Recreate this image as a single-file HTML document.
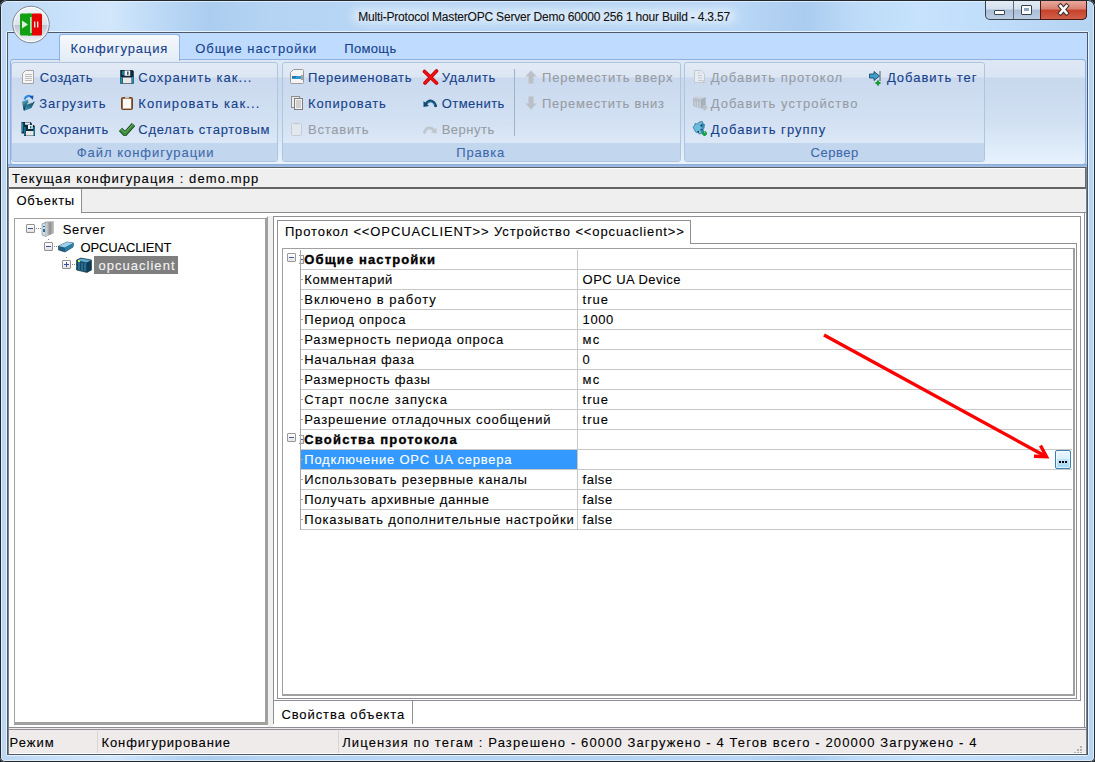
<!DOCTYPE html>
<html><head><meta charset="utf-8"><title>MasterOPC</title>
<style>
html,body{margin:0;padding:0;width:1095px;height:762px;overflow:hidden;background:#1E2328;}
.b{position:absolute;}
.t{position:absolute;white-space:nowrap;font-family:"Liberation Sans",sans-serif;line-height:16px;-webkit-text-stroke:0.1px currentColor;}
</style></head><body>
<div class="b" style="left:0px;top:0px;width:1095px;height:762px;background:linear-gradient(90deg,#BCD7F3 0px,#C8E1FA 60px,#D2E7FB 110px,#B8D6F5 170px,#ABCDEF 210px,#B5D4F4 270px,#B8D6F5 400px,#B4D3F3 560px,#B9D7F6 740px,#AACCEF 805px,#BDDBF8 855px,#C6E2FC 920px,#BFDCFA 1000px,#B5D4F2 1095px);border-radius:7px 7px 5px 5px;box-shadow:inset 0 0 0 1px #23282E, inset 0 0 0 2px rgba(230,242,252,0.8);"></div>
<div class="b" style="left:352px;top:9px;width:384px;height:14px;background:rgba(235,244,252,0.75);border-radius:7px;filter:blur(5px);"></div>
<div class="t" style="left:358.30px;top:9px;color:#111;font-size:12px;letter-spacing:-0.195px;">Multi-Protocol MasterOPC Server Demo 60000 256 1 hour Build - 4.3.57</div>
<div class="b" style="left:985px;top:1px;width:102px;height:19px;border:1px solid #3A4450;border-top:none;border-radius:0 0 5px 5px;background:linear-gradient(#E3ECF6 0%,#D2DFEE 45%,#A9BDD6 50%,#BCCDE2 100%);box-sizing:border-box;"></div>
<div class="b" style="left:1040px;top:1px;width:47px;height:19px;border:1px solid #4A1A12;border-top:none;border-radius:0 0 5px 0;background:linear-gradient(#E9A99C 0%,#D98070 45%,#C7402A 50%,#D2604A 100%);box-sizing:border-box;"></div>
<div class="b" style="left:1013px;top:1px;width:1px;height:18px;background:#5E6B7A;"></div>
<div class="b" style="left:994px;top:10px;width:11px;height:5px;background:#fff;border:1px solid #3A4450;border-radius:1px;box-sizing:border-box;"></div>
<div class="b" style="left:1021px;top:5px;width:11px;height:10px;background:#fff;border:1px solid #3A4450;border-radius:1px;box-sizing:border-box;"></div>
<div class="b" style="left:1024px;top:8px;width:5px;height:3px;background:#8FA4BE;"></div>
<svg class="b" style="left:1055px;top:2px" width="17" height="15" viewBox="0 0 17 15"><path d="M5.5 4 L11.5 11 M11.5 4 L5.5 11" stroke="#40302C" stroke-width="4.6" stroke-linecap="square"/><path d="M5.5 4 L11.5 11 M11.5 4 L5.5 11" stroke="#FFFFFF" stroke-width="2.6" stroke-linecap="square"/></svg>
<div class="b" style="left:6px;top:31px;width:1083px;height:725px;border:1px solid rgba(240,248,255,0.85);border-radius:2px;box-sizing:border-box;"></div>
<div class="b" style="left:7px;top:32px;width:1081px;height:723px;border:1px solid #4D5866;box-sizing:border-box;background:#EFEFEF;"></div>
<div class="b" style="left:8px;top:33px;width:1079px;height:27px;background:#BFDBFF;"></div>
<div class="b" style="left:8px;top:59px;width:1079px;height:108px;background:#BFDBFF;"></div>
<div class="b" style="left:10px;top:59px;width:1076px;height:106px;border:1px solid #8DB2E3;border-radius:3px;box-sizing:border-box;background:linear-gradient(#DEE8F5 0px,#DAE5F3 17px,#C8D8ED 18px,#D0DFF1 60px,#E7F2FD 104px);"></div>
<div class="b" style="left:8px;top:164px;width:1079px;height:3px;background:linear-gradient(#8BAAD6,#A1C1EA);"></div>
<div class="b" style="left:59px;top:34px;width:121px;height:27px;border:1px solid #8DB2E3;border-bottom:none;border-radius:3px 3px 0 0;box-sizing:border-box;background:linear-gradient(#F6F9FC,#E3EBF5);"></div>
<div class="t" style="left:70.40px;top:41px;color:#15428B;font-size:13px;letter-spacing:0.886px;">Конфигурация</div>
<div class="t" style="left:195.30px;top:41px;color:#15428B;font-size:13px;letter-spacing:0.936px;">Общие настройки</div>
<div class="t" style="left:344.20px;top:41px;color:#15428B;font-size:13px;letter-spacing:0.360px;">Помощь</div>
<div class="b" style="left:11px;top:62px;width:267px;height:100px;border:1px solid #AFC5DF;border-radius:3px;box-sizing:border-box;background:linear-gradient(#E2EAF5 0px,#DCE6F3 14px,#CAD9EE 15px,#D3E1F3 60px,#DCE8F6 80px);overflow:hidden;"></div>
<div class="b" style="left:12px;top:143px;width:265px;height:18px;background:#C2D6EE;border-radius:0 0 2px 2px;"></div>
<div class="t" style="left:76.70px;top:145px;color:#3E6AAA;font-size:13px;letter-spacing:0.975px;">Файл конфигурации</div>
<div class="b" style="left:282px;top:62px;width:399px;height:100px;border:1px solid #AFC5DF;border-radius:3px;box-sizing:border-box;background:linear-gradient(#E2EAF5 0px,#DCE6F3 14px,#CAD9EE 15px,#D3E1F3 60px,#DCE8F6 80px);overflow:hidden;"></div>
<div class="b" style="left:283px;top:143px;width:397px;height:18px;background:#C2D6EE;border-radius:0 0 2px 2px;"></div>
<div class="t" style="left:456.20px;top:145px;color:#3E6AAA;font-size:13px;letter-spacing:0.850px;">Правка</div>
<div class="b" style="left:684px;top:62px;width:301px;height:100px;border:1px solid #AFC5DF;border-radius:3px;box-sizing:border-box;background:linear-gradient(#E2EAF5 0px,#DCE6F3 14px,#CAD9EE 15px,#D3E1F3 60px,#DCE8F6 80px);overflow:hidden;"></div>
<div class="b" style="left:685px;top:143px;width:299px;height:18px;background:#C2D6EE;border-radius:0 0 2px 2px;"></div>
<div class="t" style="left:810.60px;top:145px;color:#3E6AAA;font-size:13px;letter-spacing:0.530px;">Сервер</div>
<div class="b" style="left:514px;top:69px;width:1px;height:67px;background:#9FB3CC;"></div>
<div class="t" style="left:39.70px;top:70px;color:#15428B;font-size:13px;letter-spacing:0.583px;">Создать</div>
<div class="t" style="left:39.30px;top:96px;color:#15428B;font-size:13px;letter-spacing:0.844px;">Загрузить</div>
<div class="t" style="left:39.70px;top:122px;color:#15428B;font-size:13px;letter-spacing:0.488px;">Сохранить</div>
<div class="t" style="left:138.30px;top:70px;color:#15428B;font-size:13px;letter-spacing:1.010px;">Сохранить как...</div>
<div class="t" style="left:138.30px;top:96px;color:#15428B;font-size:13px;letter-spacing:1.103px;">Копировать как...</div>
<div class="t" style="left:138.30px;top:122px;color:#15428B;font-size:13px;letter-spacing:0.741px;">Сделать стартовым</div>
<div class="t" style="left:308.10px;top:70px;color:#15428B;font-size:13px;letter-spacing:0.675px;">Переименовать</div>
<div class="t" style="left:308.10px;top:96px;color:#15428B;font-size:13px;letter-spacing:0.856px;">Копировать</div>
<div class="t" style="left:308.10px;top:122px;color:#979CA4;font-size:13px;letter-spacing:0.757px;">Вставить</div>
<div class="t" style="left:441.70px;top:70px;color:#15428B;font-size:13px;letter-spacing:0.675px;">Удалить</div>
<div class="t" style="left:441.70px;top:96px;color:#15428B;font-size:13px;letter-spacing:0.471px;">Отменить</div>
<div class="t" style="left:441.70px;top:122px;color:#979CA4;font-size:13px;letter-spacing:0.508px;">Вернуть</div>
<div class="t" style="left:542.00px;top:70px;color:#979CA4;font-size:13px;letter-spacing:0.791px;">Переместить вверх</div>
<div class="t" style="left:542.00px;top:96px;color:#979CA4;font-size:13px;letter-spacing:0.763px;">Переместить вниз</div>
<div class="t" style="left:710.70px;top:70px;color:#979CA4;font-size:13px;letter-spacing:0.987px;">Добавить протокол</div>
<div class="t" style="left:710.70px;top:96px;color:#979CA4;font-size:13px;letter-spacing:1.036px;">Добавить устройство</div>
<div class="t" style="left:710.70px;top:122px;color:#15428B;font-size:13px;letter-spacing:1.039px;">Добавить группу</div>
<div class="t" style="left:886.90px;top:70px;color:#15428B;font-size:13px;letter-spacing:0.986px;">Добавить тег</div>
<div class="b" style="left:8px;top:167px;width:1079px;height:1px;background:#5A5F66;"></div>
<div class="b" style="left:9px;top:168px;width:1076px;height:19px;background:#EFEFEF;border-top:1px solid #fff;border-left:1px solid #fff;box-sizing:border-box;"></div>
<div class="b" style="left:1085px;top:168px;width:2px;height:20px;background:#6A6A6A;"></div>
<div class="b" style="left:8px;top:187px;width:1079px;height:2px;background:#646464;"></div>
<div class="t" style="left:12.10px;top:171px;color:#000;font-size:13px;letter-spacing:1.100px;">Текущая конфигурация : demo.mpp</div>
<div class="b" style="left:8px;top:189px;width:1079px;height:39px;background:#EFEFEF;"></div>
<div class="b" style="left:8px;top:189px;width:74px;height:24px;background:#fff;"></div>
<div class="b" style="left:81px;top:189px;width:1px;height:24px;background:#8A8D93;"></div>
<div class="b" style="left:82px;top:212px;width:1004px;height:1px;background:#8A8D93;"></div>
<div class="b" style="left:8px;top:213px;width:1078px;height:515px;background:#fff;"></div>
<div class="b" style="left:1084px;top:212px;width:1px;height:516px;background:#8A8D93;"></div>
<div class="b" style="left:8px;top:727px;width:1078px;height:1px;background:#8A8D93;"></div>
<div class="t" style="left:16.60px;top:193px;color:#000;font-size:13px;letter-spacing:0.667px;">Объекты</div>
<div class="b" style="left:14px;top:218px;width:254px;height:507px;border-top:1px solid #A0A0A0;border-left:1px solid #A0A0A0;border-right:3px solid #A0A0A0;border-bottom:3px solid #A0A0A0;box-sizing:border-box;background:#fff;"></div>
<div class="b" style="left:268px;top:216px;width:5px;height:511px;background:#F0F0F0;"></div>
<div class="b" style="left:265px;top:216px;width:3px;height:3px;background:#A0A0A0;clip-path:polygon(100% 0,100% 100%,0 100%);"></div>
<div class="b" style="left:273px;top:216px;width:808px;height:485px;border:1px solid #8E9096;box-sizing:border-box;background:#fff;"></div>
<div class="b" style="left:273px;top:701px;width:140px;height:23px;background:#fff;border-left:1px solid #8E9096;box-sizing:border-box;"></div>
<div class="b" style="left:412px;top:701px;width:1px;height:23px;background:#8E9096;"></div>
<div class="t" style="left:281.40px;top:707px;color:#000;font-size:13px;letter-spacing:0.913px;">Свойства объекта</div>
<div class="b" style="left:277px;top:220px;width:414px;height:24px;border:1px solid #8E9096;border-bottom:none;box-sizing:border-box;background:#fff;"></div>
<div class="b" style="left:277px;top:243px;width:800px;height:456px;border:1px solid #8E9096;border-top:none;box-sizing:border-box;background:#fff;"></div>
<div class="b" style="left:690px;top:243px;width:387px;height:1px;background:#8E9096;"></div>
<div class="t" style="left:284.90px;top:224px;color:#000;font-size:13px;letter-spacing:0.886px;">Протокол &lt;&lt;OPCUACLIENT&gt;&gt; Устройство &lt;&lt;opcuaclient&gt;&gt;</div>
<div class="b" style="left:282px;top:248px;width:793px;height:448px;border-top:1px solid #A0A0A0;border-left:1px solid #A0A0A0;border-right:2px solid #A0A0A0;border-bottom:2px solid #A0A0A0;box-sizing:border-box;background:#fff;"></div>
<div class="t" style="left:304.30px;top:252px;color:#000;font-size:13px;letter-spacing:1.121px;font-weight:bold;-webkit-text-stroke:0.35px currentColor;">Общие настройки</div>
<div class="b" style="left:300px;top:269px;width:772px;height:1px;background:#C8C8C8;"></div>
<div class="b" style="left:301px;top:259px;width:2px;height:1px;background:#A8A8A8;"></div>
<div class="b" style="left:287px;top:253px;width:9px;height:9px;border:1px solid #9A9A9A;border-radius:1px;box-sizing:border-box;background:linear-gradient(#fff,#E4E4E4);"></div>
<div class="b" style="left:289px;top:257px;width:5px;height:1px;background:#4A5A9A;"></div>
<div class="b" style="left:299px;top:255px;width:5px;height:9px;border:1px solid #9A9A9A;border-left:none;border-radius:0 1px 1px 0;box-sizing:border-box;background:linear-gradient(#fff,#E4E4E4);"></div>
<div class="b" style="left:300px;top:259px;width:3px;height:1px;background:#4A5A9A;"></div>
<div class="t" style="left:304.30px;top:272px;color:#000;font-size:13px;letter-spacing:0.610px;">Комментарий</div>
<div class="t" style="left:582.60px;top:272px;color:#000;font-size:13px;letter-spacing:0.454px;">OPC UA Device</div>
<div class="b" style="left:300px;top:289px;width:772px;height:1px;background:#C8C8C8;"></div>
<div class="b" style="left:301px;top:279px;width:2px;height:1px;background:#A8A8A8;"></div>
<div class="t" style="left:304.30px;top:292px;color:#000;font-size:13px;letter-spacing:0.997px;">Включено в работу</div>
<div class="t" style="left:582.60px;top:292px;color:#000;font-size:13px;letter-spacing:1.033px;">true</div>
<div class="b" style="left:300px;top:309px;width:772px;height:1px;background:#C8C8C8;"></div>
<div class="b" style="left:301px;top:299px;width:2px;height:1px;background:#A8A8A8;"></div>
<div class="t" style="left:304.30px;top:312px;color:#000;font-size:13px;letter-spacing:0.783px;">Период опроса</div>
<div class="t" style="left:582.60px;top:312px;color:#000;font-size:13px;letter-spacing:0.567px;">1000</div>
<div class="b" style="left:300px;top:329px;width:772px;height:1px;background:#C8C8C8;"></div>
<div class="b" style="left:301px;top:319px;width:2px;height:1px;background:#A8A8A8;"></div>
<div class="t" style="left:304.30px;top:332px;color:#000;font-size:13px;letter-spacing:0.814px;">Размерность периода опроса</div>
<div class="t" style="left:582.60px;top:332px;color:#000;font-size:13px;letter-spacing:1.150px;">мс</div>
<div class="b" style="left:300px;top:349px;width:772px;height:1px;background:#C8C8C8;"></div>
<div class="b" style="left:301px;top:339px;width:2px;height:1px;background:#A8A8A8;"></div>
<div class="t" style="left:304.30px;top:352px;color:#000;font-size:13px;letter-spacing:0.688px;">Начальная фаза</div>
<div class="t" style="left:582.60px;top:352px;color:#000;font-size:13px;letter-spacing:0.000px;">0</div>
<div class="b" style="left:300px;top:369px;width:772px;height:1px;background:#C8C8C8;"></div>
<div class="b" style="left:301px;top:359px;width:2px;height:1px;background:#A8A8A8;"></div>
<div class="t" style="left:304.30px;top:372px;color:#000;font-size:13px;letter-spacing:0.707px;">Размерность фазы</div>
<div class="t" style="left:582.60px;top:372px;color:#000;font-size:13px;letter-spacing:1.150px;">мс</div>
<div class="b" style="left:300px;top:389px;width:772px;height:1px;background:#C8C8C8;"></div>
<div class="b" style="left:301px;top:379px;width:2px;height:1px;background:#A8A8A8;"></div>
<div class="t" style="left:304.30px;top:392px;color:#000;font-size:13px;letter-spacing:1.019px;">Старт после запуска</div>
<div class="t" style="left:582.60px;top:392px;color:#000;font-size:13px;letter-spacing:1.033px;">true</div>
<div class="b" style="left:300px;top:409px;width:772px;height:1px;background:#C8C8C8;"></div>
<div class="b" style="left:301px;top:399px;width:2px;height:1px;background:#A8A8A8;"></div>
<div class="t" style="left:304.30px;top:412px;color:#000;font-size:13px;letter-spacing:0.803px;">Разрешение отладочных сообщений</div>
<div class="t" style="left:582.60px;top:412px;color:#000;font-size:13px;letter-spacing:1.033px;">true</div>
<div class="b" style="left:300px;top:429px;width:772px;height:1px;background:#C8C8C8;"></div>
<div class="b" style="left:301px;top:419px;width:2px;height:1px;background:#A8A8A8;"></div>
<div class="t" style="left:304.30px;top:432px;color:#000;font-size:13px;letter-spacing:1.176px;font-weight:bold;-webkit-text-stroke:0.35px currentColor;">Свойства протокола</div>
<div class="b" style="left:300px;top:449px;width:772px;height:1px;background:#C8C8C8;"></div>
<div class="b" style="left:301px;top:439px;width:2px;height:1px;background:#A8A8A8;"></div>
<div class="b" style="left:287px;top:433px;width:9px;height:9px;border:1px solid #9A9A9A;border-radius:1px;box-sizing:border-box;background:linear-gradient(#fff,#E4E4E4);"></div>
<div class="b" style="left:289px;top:437px;width:5px;height:1px;background:#4A5A9A;"></div>
<div class="b" style="left:299px;top:435px;width:5px;height:9px;border:1px solid #9A9A9A;border-left:none;border-radius:0 1px 1px 0;box-sizing:border-box;background:linear-gradient(#fff,#E4E4E4);"></div>
<div class="b" style="left:300px;top:439px;width:3px;height:1px;background:#4A5A9A;"></div>
<div class="b" style="left:301px;top:450px;width:276px;height:19px;background:#3399FF;"></div>
<div class="t" style="left:304.30px;top:452px;color:#fff;font-size:13px;letter-spacing:0.756px;">Подключение OPC UA сервера</div>
<div class="b" style="left:300px;top:469px;width:772px;height:1px;background:#C8C8C8;"></div>
<div class="b" style="left:301px;top:459px;width:2px;height:1px;background:#A8A8A8;"></div>
<div class="t" style="left:304.30px;top:472px;color:#000;font-size:13px;letter-spacing:0.787px;">Использовать резервные каналы</div>
<div class="t" style="left:582.60px;top:472px;color:#000;font-size:13px;letter-spacing:0.513px;">false</div>
<div class="b" style="left:300px;top:489px;width:772px;height:1px;background:#C8C8C8;"></div>
<div class="b" style="left:301px;top:479px;width:2px;height:1px;background:#A8A8A8;"></div>
<div class="t" style="left:304.30px;top:492px;color:#000;font-size:13px;letter-spacing:0.704px;">Получать архивные данные</div>
<div class="t" style="left:582.60px;top:492px;color:#000;font-size:13px;letter-spacing:0.513px;">false</div>
<div class="b" style="left:300px;top:509px;width:772px;height:1px;background:#C8C8C8;"></div>
<div class="b" style="left:301px;top:499px;width:2px;height:1px;background:#A8A8A8;"></div>
<div class="t" style="left:304.30px;top:512px;color:#000;font-size:13px;letter-spacing:0.816px;">Показывать дополнительные настройки</div>
<div class="t" style="left:582.60px;top:512px;color:#000;font-size:13px;letter-spacing:0.513px;">false</div>
<div class="b" style="left:300px;top:529px;width:772px;height:1px;background:#C8C8C8;"></div>
<div class="b" style="left:301px;top:519px;width:2px;height:1px;background:#A8A8A8;"></div>
<div class="b" style="left:300px;top:250px;width:1px;height:280px;background:#A8A8A8;"></div>
<div class="b" style="left:577px;top:250px;width:1px;height:280px;background:#C8C8C8;"></div>
<div class="b" style="left:1055px;top:450px;width:16px;height:19px;border:1px solid #3C7FB1;border-radius:2px;box-sizing:border-box;background:linear-gradient(#EAF6FD 0%,#D9F0FC 45%,#BEE6FD 50%,#A7D9F5 100%);box-shadow:inset 0 0 0 1px rgba(255,255,255,0.6);"></div>
<div class="b" style="left:1059px;top:461px;width:2px;height:2px;background:#000;"></div>
<div class="b" style="left:1062px;top:461px;width:2px;height:2px;background:#000;"></div>
<div class="b" style="left:1065px;top:461px;width:2px;height:2px;background:#000;"></div>
<svg class="b" style="left:800px;top:320px" width="270" height="160" viewBox="0 0 270 160"><g stroke="#FF0000" stroke-width="3.4" stroke-linecap="butt" fill="none"><path d="M24 15 L246 136.5"/><path d="M240.5 125.5 L246.5 136.8 L234 136.3"/></g></svg>
<div class="b" style="left:8px;top:728px;width:1079px;height:26px;background:#EFEBEA;"></div>
<div class="b" style="left:8px;top:729px;width:1079px;height:1px;background:#8E9096;"></div>
<div class="b" style="left:97px;top:731px;width:1px;height:22px;background:#D8D4D3;"></div>
<div class="b" style="left:338px;top:731px;width:1px;height:22px;background:#D8D4D3;"></div>
<div class="t" style="left:9.60px;top:735px;color:#000;font-size:13px;letter-spacing:1.000px;">Режим</div>
<div class="t" style="left:101.60px;top:735px;color:#000;font-size:13px;letter-spacing:0.857px;">Конфигурирование</div>
<div class="t" style="left:342.20px;top:735px;color:#000;font-size:13px;letter-spacing:1.118px;">Лицензия по тегам : Разрешено - 60000 Загружено - 4 Тегов всего - 200000 Загружено - 4</div>
<svg class="b" style="left:10px;top:4px" width="42" height="42" viewBox="0 0 42 42"><defs>
<radialGradient id="orbg" cx="50%" cy="35%" r="65%"><stop offset="0" stop-color="#FFFFFF"/><stop offset="0.55" stop-color="#E4E9EF"/><stop offset="1" stop-color="#A9B4C0"/></radialGradient>
<linearGradient id="orbs" x1="0" y1="0" x2="0" y2="1"><stop offset="0" stop-color="#F4F6F8"/><stop offset="0.5" stop-color="#DDE3EA"/><stop offset="0.52" stop-color="#BCC6D2"/><stop offset="1" stop-color="#F2F5F8"/></linearGradient>
</defs>
<circle cx="21" cy="20.5" r="18.3" fill="url(#orbs)" stroke="#7E8A98" stroke-width="1"/>
<circle cx="21" cy="20.5" r="17" fill="none" stroke="#FFFFFF" stroke-opacity="0.7" stroke-width="1"/>
<rect x="10" y="9.5" width="11" height="22" rx="1.5" fill="#12A012"/>
<rect x="21" y="9.5" width="11" height="22" rx="1.5" fill="#E60000"/>
<rect x="18" y="9.5" width="4" height="22" fill="#12A012"/>
<path d="M12 16.5 L18 20.5 L12 24.5 Z" fill="#FFFFFF" fill-opacity="0.85"/>
<rect x="20.3" y="13" width="1.2" height="16" fill="#FFFFFF"/>
<rect x="24" y="17.5" width="1.4" height="6" fill="#FFFFFF" fill-opacity="0.9"/>
<rect x="27" y="17.5" width="1.4" height="6" fill="#FFFFFF" fill-opacity="0.9"/></svg>
<svg class="b" style="left:22px;top:70px" width="12" height="14" viewBox="0 0 12 14"><path d="M3.5 0.5 H11.5 V13.5 H0.5 V3.5 Z" fill="#F6F6F6" stroke="#A4A4A4"/><g stroke="#BDBDBD"><path d="M3 4.5H10M3 6.5H10M3 8.5H10M3 10.5H10"/></g></svg>
<svg class="b" style="left:19px;top:93px" width="20" height="20" viewBox="0 0 20 20"><defs><linearGradient id="fldb" x1="0" y1="0" x2="0.3" y2="1"><stop offset="0" stop-color="#62C4DA"/><stop offset="1" stop-color="#0B2A40"/></linearGradient><linearGradient id="fldf" x1="1" y1="0" x2="0" y2="1"><stop offset="0" stop-color="#163F58"/><stop offset="1" stop-color="#3B9FBE"/></linearGradient></defs><path d="M3 8.5 L9 6.5 L9.5 11 L5.5 17.8 L4.5 17 Z" fill="url(#fldb)"/><path d="M7.5 11 L15.8 8.5 L12.5 15 L5.5 17.8 Z" fill="url(#fldf)"/><path d="M8 11 L14 9.3" stroke="#D8EEF6" stroke-width="0.8"/><path d="M5.5 6.5 C6.5 3, 10.5 1.8, 12.5 4.2" stroke="#2C8FE0" stroke-width="2.2" fill="none"/><path d="M10.5 3.2 L14.5 2.5 L13.8 7 Z" fill="#1C4FB0"/></svg>
<svg class="b" style="left:19px;top:119px" width="20" height="20" viewBox="0 0 20 20"><path d="M2.5 3 H11.5 L13 4.5 V14.5 H2.5 Z" fill="#0F2E42"/><rect x="3" y="4" width="1.2" height="9" fill="#1B8DAE"/><rect x="6" y="3.5" width="5" height="2.2" fill="#E8ECEE"/><path d="M5 6 H14.8 L16 7.2 V17 H5 Z" fill="#0E2A3C"/><rect x="5.3" y="8" width="1.2" height="8.5" fill="#1B8DAE"/><rect x="14.5" y="8" width="1.2" height="8.5" fill="#1B8DAE"/><rect x="9" y="6" width="4.8" height="4" fill="#EEF0F2"/><rect x="11" y="7" width="1.4" height="2.5" fill="#1F6F8A"/><rect x="7" y="12" width="7.5" height="4.6" fill="#E6E6E6"/></svg>
<svg class="b" style="left:117px;top:67px" width="20" height="20" viewBox="0 0 20 20"><path d="M3.2 3 H15.5 L16.8 4.3 V16.7 H3.2 Z" fill="#0E2A3C"/><rect x="3.6" y="10" width="1.6" height="6.4" fill="#1B93B4"/><rect x="14.9" y="10" width="1.6" height="6.4" fill="#1B93B4"/><rect x="5" y="4" width="2" height="4" fill="#1A7F9C"/><rect x="7.5" y="3.5" width="5.7" height="5.3" fill="#F0F1F2"/><rect x="10.2" y="4.5" width="1.3" height="3.3" fill="#0E2A3C"/><rect x="5.8" y="10.5" width="8.7" height="5.7" fill="#E9E9E9"/></svg>
<svg class="b" style="left:121px;top:96px" width="12" height="14" viewBox="0 0 12 14"><rect x="0.5" y="1.5" width="11" height="12" rx="1" fill="#A26A3A" stroke="#6E4422"/><rect x="2" y="3" width="8" height="9.5" fill="#FAFAFA"/><rect x="4" y="0.5" width="4" height="2" fill="#C8C8C8"/></svg>
<svg class="b" style="left:119px;top:122px" width="16" height="14" viewBox="0 0 16 14"><path d="M1.5 7.5 L6 12 L14.5 2.5" stroke="#1E4A20" stroke-width="4.6" fill="none" stroke-linejoin="miter"/><path d="M1.5 7.5 L6 12 L14.5 2.5" stroke="#3D8F3F" stroke-width="2.6" fill="none"/><path d="M2.5 7 L6 10.5 L13.5 2.5" stroke="#78C070" stroke-width="0.8" fill="none"/></svg>
<svg class="b" style="left:290px;top:69px" width="14" height="15" viewBox="0 0 14 15"><path d="M3.5 0.5 H12.5 Q13.5 0.5 13.5 1.5 V13.5 Q13.5 14.5 12.5 14.5 H1.5 Q0.5 14.5 0.5 13.5 V3.5 Z" fill="#F4F4F4" stroke="#9A9A9A"/><rect x="2" y="7" width="9" height="3" fill="#2E9AD0"/><rect x="2" y="7.5" width="4" height="1" fill="#1A4F7A"/><rect x="11.5" y="6" width="1" height="5" fill="#555"/></svg>
<svg class="b" style="left:291px;top:96px" width="12" height="14" viewBox="0 0 12 14"><rect x="0.5" y="0.5" width="8" height="11" fill="#EDEDED" stroke="#8E8E8E"/><rect x="3.5" y="2.5" width="8" height="11" fill="#F2F2F2" stroke="#7E7E7E"/><rect x="5" y="4" width="5" height="8" fill="#CFCFCF"/></svg>
<svg class="b" style="left:291px;top:122px" width="11" height="14" viewBox="0 0 11 14"><rect x="0.5" y="1.5" width="10" height="12" rx="1" fill="#E3E8EE" stroke="#C4CBD4"/><rect x="3.5" y="0.5" width="4" height="2" fill="#C9D0D8"/></svg>
<svg class="b" style="left:422px;top:69px" width="17" height="16" viewBox="0 0 17 16"><path d="M2.5 2.5 L14.5 14 M14.5 2 L3 14" stroke="#C00000" stroke-width="3.6" stroke-linecap="round"/><path d="M2.5 2.5 L14.5 14 M14.5 2 L3 14" stroke="#F01010" stroke-width="2.2" stroke-linecap="round"/></svg>
<svg class="b" style="left:423px;top:99px" width="14" height="9" viewBox="0 0 14 9"><path d="M3 5 C6 0.5,11 0.5,13 8" stroke="#12476E" stroke-width="2.8" fill="none"/><path d="M0.5 2 L0.5 8 L6 7 Z" fill="#12476E"/><path d="M4 4.5 C7 2,10 2,12 6" stroke="#2F86B8" stroke-width="1" fill="none"/></svg>
<svg class="b" style="left:423px;top:126px" width="14" height="8" viewBox="0 0 14 8"><path d="M11 4.5 C8 0.5,3 0.5,1 7.5" stroke="#BFC6CE" stroke-width="2.8" fill="none"/><path d="M13.5 1.5 L13.5 7.5 L8 6.5 Z" fill="#BFC6CE"/></svg>
<svg class="b" style="left:525px;top:70px" width="12" height="14" viewBox="0 0 12 14"><path d="M6 0.5 L11.5 6.5 H8.5 V13.5 H3.5 V6.5 H0.5 Z" fill="#B9C0CA" stroke="#C9CFD7" stroke-width="0.6"/></svg>
<svg class="b" style="left:525px;top:96px" width="12" height="14" viewBox="0 0 12 14"><path d="M6 13.5 L11.5 7.5 H8.5 V0.5 H3.5 V7.5 H0.5 Z" fill="#B9C0CA" stroke="#C9CFD7" stroke-width="0.6"/></svg>
<svg class="b" style="left:694px;top:70px" width="13" height="15" viewBox="0 0 13 15"><path d="M0.5 0.5 H7 L10.5 4 V12.5 H0.5 Z" fill="#E8ECF1" stroke="#C3C9D1"/><g stroke="#C3C9D1"><path d="M4 3H6M4 5.5H8M4 8H8M4 10.5H8"/></g><path d="M9.5 10 V14.5 M7.5 12.3 H11.5" stroke="#C8CED6" stroke-width="1.6"/></svg>
<svg class="b" style="left:690px;top:93px" width="20" height="20" viewBox="0 0 20 20"><path d="M3 5 L6 3.5 L8.5 4.5 L15.5 4.5 V13.5 L11 15.5 L3 13 Z" fill="#B5BDC8"/><path d="M3 5 L6 3.5 L15.5 4.5 L11 6.5 Z" fill="#C9D0D9"/><path d="M11 6.5 V15.5 L15.5 13.5 V4.5 Z" fill="#A7B0BC"/><g stroke="#D0D6DE" stroke-width="1"><path d="M5 8.5V13M7.5 8.5V14M10 8.5V14.5"/></g><path d="M14.5 12 V17.5 M12 14.5 H17.5" stroke="#B8C0CA" stroke-width="2.4"/></svg>
<svg class="b" style="left:690px;top:118px" width="20" height="20" viewBox="0 0 20 20"><path d="M9 4 L12.5 3.5 L13 6 L14.5 6.5 L14 10 L13 11.5 L14 14 L11 15.5 L9 16 L8 14 L6 14.5 L4.5 12 L3 9 L4.5 8 L5 5.5 L7.5 6 Z" fill="#6CBCDC" stroke="#2D6E92" stroke-width="0.7"/><path d="M10.5 6.5 L12.8 6.5 L12.5 8.5 L10.5 8.5 Z M10.5 11 L13 11 L12.5 12.5 L10.5 12.5 Z M7.5 13 L9 13 L8.8 14.5 L7.5 14.5 Z" fill="#0C2A44"/><path d="M12 5 L14.5 6.5 L13 11.5 L14 14 L11 15.5 Z" fill="#2A7FAE" fill-opacity="0.8"/><path d="M14.5 13 V18 M12 15.5 H17" stroke="#16A040" stroke-width="2.4"/><path d="M14.5 13.5 V15" stroke="#7FD890" stroke-width="1"/></svg>
<svg class="b" style="left:869px;top:70px" width="14" height="16" viewBox="0 0 14 16"><path d="M0.5 4 H5 V1.5 L10.5 6 L5 10.5 V8 H0.5 Z" fill="#3CA0CC" stroke="#1E4C66" stroke-width="0.9"/><path d="M11 1 V11" stroke="#555D66" stroke-width="1"/><path d="M9 10.5 V15.5 M6.5 13 H11.5" stroke="#139A30" stroke-width="2.2"/></svg>
<div class="b" style="left:26px;top:224px;width:9px;height:9px;border:1px solid #919191;border-radius:1px;box-sizing:border-box;background:linear-gradient(#FFFFFF,#E2E2E2);"></div>
<div class="b" style="left:28px;top:228px;width:5px;height:1px;background:#3C4E9E;"></div>
<div class="b" style="left:36px;top:228px;width:1px;height:1px;background:#8C8C8C;"></div>
<div class="b" style="left:38px;top:228px;width:1px;height:1px;background:#8C8C8C;"></div>
<div class="b" style="left:40px;top:228px;width:1px;height:1px;background:#8C8C8C;"></div>
<div class="b" style="left:44px;top:242px;width:9px;height:9px;border:1px solid #919191;border-radius:1px;box-sizing:border-box;background:linear-gradient(#FFFFFF,#E2E2E2);"></div>
<div class="b" style="left:46px;top:246px;width:5px;height:1px;background:#3C4E9E;"></div>
<div class="b" style="left:54px;top:246px;width:1px;height:1px;background:#8C8C8C;"></div>
<div class="b" style="left:56px;top:246px;width:1px;height:1px;background:#8C8C8C;"></div>
<div class="b" style="left:58px;top:246px;width:1px;height:1px;background:#8C8C8C;"></div>
<div class="b" style="left:62px;top:260px;width:9px;height:9px;border:1px solid #919191;border-radius:1px;box-sizing:border-box;background:linear-gradient(#FFFFFF,#E2E2E2);"></div>
<div class="b" style="left:64px;top:264px;width:5px;height:1px;background:#3C4E9E;"></div>
<div class="b" style="left:66px;top:262px;width:1px;height:5px;background:#3C4E9E;"></div>
<div class="b" style="left:72px;top:264px;width:1px;height:1px;background:#8C8C8C;"></div>
<div class="b" style="left:74px;top:264px;width:1px;height:1px;background:#8C8C8C;"></div>
<div class="b" style="left:76px;top:264px;width:1px;height:1px;background:#8C8C8C;"></div>
<div class="b" style="left:48px;top:239px;width:1px;height:1px;background:#8C8C8C;"></div>
<div class="b" style="left:66px;top:257px;width:1px;height:1px;background:#8C8C8C;"></div>
<svg class="b" style="left:41px;top:221px" width="14" height="16" viewBox="0 0 14 16"><path d="M1 3 L5 0.5 H13 L13 12 L5 15.5 L1 14 Z" fill="#9AA2AA"/><path d="M1 3 L5 1.5 V15.5 L1 14 Z" fill="#CFE0EA" stroke="#7A8A96" stroke-width="0.6"/><path d="M5 1.5 L13 0.5 V12 L5 15.5 Z" fill="url(#srvg)"/><rect x="2" y="5" width="2" height="1" fill="#2E6E96"/><rect x="2" y="8" width="2" height="3" fill="#2E6E96"/><defs><linearGradient id="srvg" x1="0" x2="1"><stop offset="0" stop-color="#D8D8D8"/><stop offset="0.5" stop-color="#8E8E8E"/><stop offset="1" stop-color="#C8C8C8"/></linearGradient></defs></svg>
<svg class="b" style="left:58px;top:241px" width="16" height="12" viewBox="0 0 16 12"><path d="M0.5 5 L9 1 L15.5 2 L15 6 L7 11 L0.5 9 Z" fill="#1F5F80" stroke="#123A50" stroke-width="0.6"/><path d="M0.5 5 L9 1 L15.5 2 L7 6.5 Z" fill="#9FD0EA"/><path d="M7 6.5 L15.5 2 L15 6 L7 11 Z" fill="#2A7DA6"/></svg>
<svg class="b" style="left:76px;top:257px" width="16" height="16" viewBox="0 0 16 16"><path d="M0.5 3 L5 1 L15.5 3 V13 L11 15.5 L0.5 13 Z" fill="#154A66" stroke="#0C2E40" stroke-width="0.6"/><path d="M1 3.5 L5.5 1.5 L15 3.5 L11 5.5 Z" fill="#5FA8C8"/><g stroke="#3E8CB4" stroke-width="1"><path d="M3 5V13M6 6V14M9 6V14"/></g><path d="M11 5.5 V15 L15 13 V3.5 Z" fill="#0F3A52"/><rect x="2" y="3" width="2" height="2" fill="#C8F060"/></svg>
<div class="b" style="left:94px;top:256px;width:84px;height:18px;background:#7F7F7F;"></div>
<div class="t" style="left:62.70px;top:222px;color:#000;font-size:13px;letter-spacing:0.720px;">Server</div>
<div class="t" style="left:80.50px;top:240px;color:#000;font-size:13px;letter-spacing:-0.155px;">OPCUACLIENT</div>
<div class="t" style="left:98.40px;top:258px;color:#F4F4F4;font-size:13px;letter-spacing:1.035px;">opcuaclient</div>
<div class="b" style="left:1080px;top:746px;width:2px;height:2px;background:#B4B0AF;"></div>
<div class="b" style="left:1080px;top:749px;width:2px;height:2px;background:#B4B0AF;"></div>
<div class="b" style="left:1080px;top:752px;width:2px;height:2px;background:#B4B0AF;"></div>
<div class="b" style="left:1077px;top:749px;width:2px;height:2px;background:#B4B0AF;"></div>
<div class="b" style="left:1077px;top:752px;width:2px;height:2px;background:#B4B0AF;"></div>
<div class="b" style="left:1074px;top:752px;width:2px;height:2px;background:#B4B0AF;"></div>
<div class="b" style="left:8px;top:167px;width:1px;height:587px;background:#7C838C;"></div>
<div class="b" style="left:1086px;top:167px;width:1px;height:587px;background:#7C838C;"></div>
<div class="b" style="left:9px;top:753px;width:1077px;height:1px;background:#FFFFFF;"></div>
</body></html>
